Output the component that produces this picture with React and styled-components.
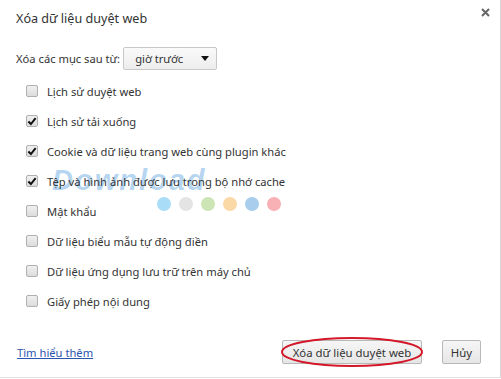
import React from "react";
import styled, { createGlobalStyle } from "styled-components";

const GlobalStyle = createGlobalStyle`
  html, body {
    margin: 0;
    padding: 0;
    background: #fff;
  }
  body {
    font-family: "Noto Sans", "Open Sans", sans-serif;
    color: #333;
  }
`;

const items = [
  { label: "Lịch sử duyệt web", checked: false },
  { label: "Lịch sử tải xuống", checked: true },
  { label: "Cookie và dữ liệu trang web cùng plugin khác", checked: true },
  { label: "Tệp và hình ảnh được lưu trong bộ nhớ cache", checked: true },
  { label: "Mật khẩu", checked: false },
  { label: "Dữ liệu biểu mẫu tự động điền", checked: false },
  { label: "Dữ liệu ứng dụng lưu trữ trên máy chủ", checked: false },
  { label: "Giấy phép nội dung", checked: false },
];

const dots = ["#a9dcf7", "#e4e4e4", "#cbe6b4", "#fbd9a6", "#a9cdec", "#f7b0b4"];

function App() {
  return (
    <>
      <GlobalStyle />
      <Dialog>
        <Header>
          <Title>Xóa dữ liệu duyệt web</Title>
          <CloseButton aria-label="close">
            <svg width="9" height="9" viewBox="0 0 9 9">
              <path d="M1 1 L8 8 M8 1 L1 8" stroke="#666" strokeWidth="2" />
            </svg>
          </CloseButton>
        </Header>

        <RangeRow>
          <RangeLabel>Xóa các mục sau từ:</RangeLabel>
          <Select>
            <span>giờ trước</span>
            <Arrow />
          </Select>
        </RangeRow>

        <List>
          <Watermark>
            <WatermarkText>Download</WatermarkText>
            <Dots>
              {dots.map((c) => (
                <Dot key={c} color={c} />
              ))}
            </Dots>
          </Watermark>
          {items.map((item) => (
            <Row key={item.label}>
              <Box>
                {item.checked && (
                  <svg width="11" height="11" viewBox="0 0 11 11">
                    <path
                      d="M1.5 5.5 L4.3 8.3 L9.5 1.8"
                      stroke="#111"
                      strokeWidth="2.2"
                      fill="none"
                    />
                  </svg>
                )}
              </Box>
              <Label>{item.label}</Label>
            </Row>
          ))}
        </List>

        <Footer>
          <Link href="#">Tìm hiểu thêm</Link>
          <Buttons>
            <Highlight>
              <Button width={140}>Xóa dữ liệu duyệt web</Button>
              <Ellipse viewBox="0 0 144 32" preserveAspectRatio="none">
                <ellipse
                  cx="72"
                  cy="16"
                  rx="70"
                  ry="14"
                  fill="none"
                  stroke="#d3182a"
                  strokeWidth="2"
                />
              </Ellipse>
            </Highlight>
            <Button width={39}>Hủy</Button>
          </Buttons>
        </Footer>
      </Dialog>
    </>
  );
}

const Dialog = styled.div`
  position: relative;
  width: 500px;
  height: 377px;
  border-right: 1px solid #d6d6d6;
  border-bottom: 1px solid #e2e2e2;
  background: #fff;
  box-sizing: content-box;
`;

const Header = styled.div`
  display: flex;
  justify-content: space-between;
  align-items: flex-start;
  height: 47px;
  padding: 0 10px 0 16px;
`;

const Title = styled.h1`
  margin: 9px 0 0;
  font-size: 12.6px;
  font-weight: 400;
  line-height: 20px;
  color: #333;
`;

const CloseButton = styled.div`
  display: flex;
  margin-top: 8px;
`;

const RangeRow = styled.div`
  display: flex;
  align-items: center;
  gap: 3px;
  height: 23px;
  padding-left: 16px;
`;

const RangeLabel = styled.span`
  font-size: 11.2px;
`;

const Select = styled.div`
  display: flex;
  align-items: center;
  justify-content: space-between;
  box-sizing: border-box;
  width: 94px;
  height: 23px;
  padding: 0 7px 0 11px;
  border: 1px solid #c8c8c8;
  border-radius: 2px;
  background: linear-gradient(#fafafa, #ededed);
  font-size: 11.2px;
`;

const Arrow = styled.span`
  width: 0;
  height: 0;
  border-left: 4px solid transparent;
  border-right: 4px solid transparent;
  border-top: 5px solid #111;
`;

const List = styled.div`
  position: relative;
  margin-top: 6px;
  padding-left: 26px;
`;

const Row = styled.div`
  position: relative;
  display: flex;
  align-items: center;
  gap: 9px;
  height: 30px;
`;

const Box = styled.span`
  display: flex;
  align-items: center;
  justify-content: center;
  box-sizing: border-box;
  width: 12px;
  height: 12px;
  border: 1px solid #b0b0b0;
  border-radius: 2px;
  background: linear-gradient(#f0f0f0, #dcdcdc);
`;

const Label = styled.span`
  font-size: 11.2px;
  color: #333;
`;

const Watermark = styled.div`
  position: absolute;
  left: 52px;
  top: 91px;
  pointer-events: none;
`;

const WatermarkText = styled.div`
  font-family: "Liberation Sans", sans-serif;
  font-size: 29px;
  font-weight: 700;
  font-style: italic;
  letter-spacing: 2px;
  line-height: 26px;
  color: rgba(60, 145, 215, 0.38);
`;

const Dots = styled.div`
  display: flex;
  gap: 8px;
  margin: 4px 0 0 105px;
`;

const Dot = styled.span`
  width: 14px;
  height: 14px;
  border-radius: 50%;
  background: ${(p) => p.color};
`;

const Footer = styled.div`
  display: flex;
  justify-content: space-between;
  align-items: center;
  margin-top: 24px;
  padding: 0 19px 0 17px;
`;

const Link = styled.a`
  font-size: 11.2px;
  color: #2a55b0;
  text-decoration: underline;
`;

const Buttons = styled.div`
  display: flex;
  gap: 20px;
`;

const Highlight = styled.div`
  position: relative;
  display: flex;
`;

const Button = styled.button`
  width: ${(p) => p.width}px;
  height: 24px;
  padding: 0;
  border: 1px solid #b8b8b8;
  border-radius: 2px;
  background: linear-gradient(#f6f6f6, #e6e6e6);
  font-family: "Noto Sans", sans-serif;
  font-size: 11.4px;
  color: #333;
`;

const Ellipse = styled.svg`
  position: absolute;
  left: -2px;
  top: -4px;
  width: 144px;
  height: 32px;
`;

export default App;
